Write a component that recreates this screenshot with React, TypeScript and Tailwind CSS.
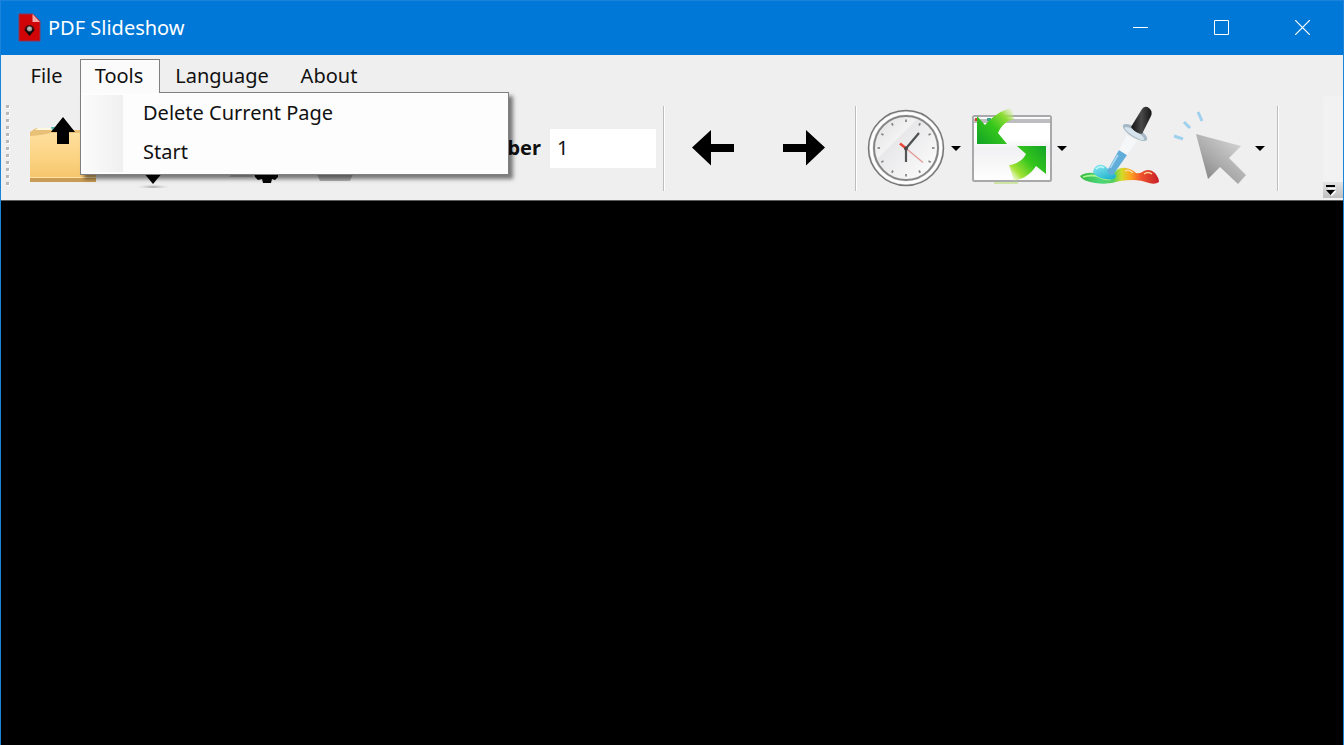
import React from "react";

function AppIcon() {
  return (
    <svg className="h-[30px] w-6" viewBox="0 0 24 30" aria-hidden="true">
      <path d="M2 1h14l7 7v20H2z" fill="#cf0508" stroke="#8c3557" strokeWidth="1" />
      <path d="M15.500 1v8H23z" fill="#f3a9a9" />
      <path d="M7.500 17a5 5 0 0 1 10 0l-5 5z" fill="#3a1010" />
      <path d="M7.500 17l5 6 5-6z" fill="#100c0c" />
      <circle cx="12.500" cy="15.800" r="2.600" fill="#9a9a9a" />
      <circle cx="12.500" cy="15.400" r="1.200" fill="#c8c8c8" />
    </svg>
  );
}

function FolderIcon() {
  return (
    <svg className="size-20" viewBox="0 0 80 80" aria-hidden="true">
      <defs>
        <linearGradient id="folder" x1="0" y1="0" x2="0" y2="1">
          <stop offset="0" stopColor="#fedf9e" />
          <stop offset="0.5" stopColor="#fcd484" />
          <stop offset="1" stopColor="#f5c56c" />
        </linearGradient>
      </defs>
      <path d="M1 24l6-4h18l3 2h39v48H1z" fill="#e9c078" />
      <path d="M7 21l2-1h14l2 2H6z" fill="#fff7df" />
      <path d="M22 19h4l2 3h-5z" fill="#4fb5ad" />
      <path d="M1 28q14-1 20-3h46v46H1z" fill="url(#folder)" />
      <path d="M1 70h66v4H1z" fill="#c89c54" />
      <path d="M1 69h66v1H1z" fill="#ffe2a6" />
      <path d="M34 9l12 15h-6v12H28V24h-6z" fill="#000" />
    </svg>
  );
}

function SlidesIcon() {
  return (
    <svg className="size-20" viewBox="0 0 80 80" aria-hidden="true">
      <defs>
        <radialGradient id="slideShade">
          <stop offset="0" stopColor="#a3a3a3" />
          <stop offset="1" stopColor="#efefef" stopOpacity="0" />
        </radialGradient>
      </defs>
      <ellipse cx="40" cy="79" rx="19" ry="3" fill="url(#slideShade)" />
      <path d="M30 64h20L40 76z" fill="#050505" />
    </svg>
  );
}

function GearIcon() {
  return (
    <svg className="h-20 w-[72px]" viewBox="0 0 72 80" aria-hidden="true">
      <path d="M25 66h24v3l-3 3-3-1-1 4h-8l-1-4-4 1-3-3z" fill="#080808" />
      <path d="M2 67h22v2H0z" fill="#c2c2c2" />
    </svg>
  );
}

function PageIcon() {
  return (
    <svg className="h-20 w-[60px]" viewBox="0 0 60 80" aria-hidden="true">
      <path d="M12 66h36l-3 7H15z" fill="#b4b4b4" />
    </svg>
  );
}

function ArrowIcon({ right = false }: { right?: boolean }) {
  return (
    <svg className="size-20" viewBox="0 0 80 80" aria-hidden="true">
      {right ? (
        <path d="M20 36h23V22l19 17.500L43 57.500V44H20z" fill="#000" />
      ) : (
        <path d="M61 36H38V22L19 39.500 38 57.500V44h23z" fill="#000" />
      )}
    </svg>
  );
}

function ClockIcon() {
  const ticks = Array.from({ length: 12 }, (_, i) => i * 30);
  return (
    <svg className="size-20" viewBox="0 0 80 80" aria-hidden="true">
      <defs>
        <linearGradient id="clockFace" x1="0" y1="0" x2="1" y2="1">
          <stop offset="0" stopColor="#dedede" />
          <stop offset="0.35" stopColor="#f3f3f3" />
          <stop offset="0.37" stopColor="#e8e8ea" />
          <stop offset="1" stopColor="#fff" />
        </linearGradient>
      </defs>
      <circle cx="40" cy="40" r="37.500" fill="#e4e4e4" stroke="#777" strokeWidth="1.500" />
      <circle cx="40" cy="40" r="34.800" fill="none" stroke="#fff" strokeWidth="2.500" />
      <circle cx="40" cy="40" r="32" fill="url(#clockFace)" stroke="#858585" strokeWidth="2" />
      {ticks.map((a) => (
        <path
          key={a}
          d="M40 11.500v2.500"
          stroke="#888"
          strokeWidth="1.800"
          transform={`rotate(${a} 40 40)`}
        />
      ))}
      <path d="M40 40v14" stroke="#555" strokeWidth="2.200" />
      <path d="M39.500 41L53 25" stroke="#4d5053" strokeWidth="2.200" />
      <path d="M36 37l21 17.500" stroke="#e29a96" strokeWidth="1.300" />
      <path d="M34 35.500l5.500 4.500" stroke="#e9463e" strokeWidth="2.600" />
      <circle cx="40" cy="40.500" r="2" fill="#474747" />
    </svg>
  );
}

function ResizeIcon() {
  return (
    <svg className="size-20 overflow-visible" viewBox="0 0 80 80" aria-hidden="true">
      <defs>
        <linearGradient id="pane" x1="0" y1="0" x2="0" y2="1">
          <stop offset="0" stopColor="#fff" />
          <stop offset="0.35" stopColor="#fff" />
          <stop offset="0.5" stopColor="#f1f1f3" />
          <stop offset="1" stopColor="#fff" />
        </linearGradient>
        <linearGradient id="inward" gradientUnits="userSpaceOnUse" x1="8" y1="36" x2="43" y2="2">
          <stop offset="0" stopColor="#14a526" />
          <stop offset="0.45" stopColor="#35c61c" />
          <stop offset="0.75" stopColor="#8fdc35" />
          <stop offset="1" stopColor="#d8f19a" stopOpacity="0.1" />
        </linearGradient>
        <linearGradient id="outward" gradientUnits="userSpaceOnUse" x1="74" y1="40" x2="38" y2="72">
          <stop offset="0" stopColor="#14a526" />
          <stop offset="0.45" stopColor="#35c61c" />
          <stop offset="0.78" stopColor="#a5e336" />
          <stop offset="1" stopColor="#d8f19a" stopOpacity="0.1" />
        </linearGradient>
      </defs>
      <rect x="1" y="8" width="78" height="65" rx="1.500" fill="url(#pane)" stroke="#a9a9ab" strokeWidth="2" />
      <path d="M2 9h76v2H2z" fill="#fafafa" />
      <path d="M2 11h76v4H2z" fill="#bdbdbf" />
      <path d="M3 10h4v3H3z" fill="#d0402e" />
      <path d="M15 10h4v3h-4z" fill="#3ba48d" />
      <path d="M5 8l8 9C20 9 28 3 39 0l3 11c-8 2-13 7-16 14l9 11H5z" fill="url(#inward)" />
      <path d="M74 38v28l-10-8c-6 9-13 13-22 15l-5-16c8-1 14-5 17-11l-9-8z" fill="url(#outward)" />
      <path d="M22 75h24" stroke="#cfe6a6" strokeWidth="2" />
    </svg>
  );
}

function DropperIcon() {
  return (
    <svg className="size-20 overflow-visible" viewBox="0 0 80 80" aria-hidden="true">
      <defs>
        <linearGradient id="paint" gradientUnits="userSpaceOnUse" x1="2" y1="0" x2="82" y2="0">
          <stop offset="0" stopColor="#37b83f" />
          <stop offset="0.25" stopColor="#4bd67a" />
          <stop offset="0.42" stopColor="#55cf5c" />
          <stop offset="0.52" stopColor="#d2dc28" />
          <stop offset="0.63" stopColor="#ffa51f" />
          <stop offset="0.76" stopColor="#f0532c" />
          <stop offset="1" stopColor="#c41c2a" />
        </linearGradient>
        <linearGradient id="drop" x1="0" y1="0" x2="0.6" y2="1">
          <stop offset="0" stopColor="#8eeaf2" />
          <stop offset="1" stopColor="#25b5cf" />
        </linearGradient>
        <linearGradient id="bulb" x1="0" x2="1">
          <stop offset="0" stopColor="#111" />
          <stop offset="0.5" stopColor="#4a4a4a" />
          <stop offset="1" stopColor="#151515" />
        </linearGradient>
      </defs>
      <path d="M2 68q6-4 14-3 12 2 22-2 4-4 10-3 6 1 10 5 4 1 8-2 6-3 11 2 4 5 4 9-4 3-10 1-8-3-15-3-8 0-14 1-12 4-25 2Q4 73 2 68z" fill="url(#paint)" />
      <path d="M5 69q10-3 16 0 5 3 12 2" fill="none" stroke="#a9f58e" strokeWidth="1.800" />
      <path d="M15 64c1-8 10-10 15-3l8 6c0 5-6 5-10 4-5 0-11-3-13-7z" fill="url(#drop)" />
      <path d="M18 61q4-4 8-1" fill="none" stroke="#c4f7fa" strokeWidth="1.500" />
      <path d="M47 63q4-2 8 2M66 66q4-3 8 0" fill="none" stroke="#ffd69a" strokeWidth="1.500" />
      <path d="M41 42l8 5-14 20q-4 0-6-4z" fill="#5fadd8" />
      <path d="M40 47L32 60" stroke="#a3d3ee" strokeWidth="2" />
      <path d="M49 27l10 6-10 14-8-5z" fill="#f6f7f9" />
      <ellipse cx="57" cy="24.500" rx="14" ry="5" transform="rotate(32 57 24.500)" fill="#a6b8c6" />
      <ellipse cx="56.500" cy="25.500" rx="11.500" ry="2.800" transform="rotate(32 56.500 25.500)" fill="#d6e3ec" />
      <path d="M53 19L64 1q3-4 7-1 4 3 2 8l-9 18q-7-1-11-7z" fill="url(#bulb)" />
    </svg>
  );
}

function PointerIcon() {
  return (
    <svg className="size-20" viewBox="0 0 80 80" aria-hidden="true">
      <defs>
        <linearGradient id="pointer" x1="0" y1="1" x2="0.8" y2="0.1">
          <stop offset="0" stopColor="#777" />
          <stop offset="0.5" stopColor="#aaa" />
          <stop offset="1" stopColor="#d2d2d2" />
        </linearGradient>
      </defs>
      <path d="M24 26l45 12-12 12 17 17-8 9-18-17-12 12z" fill="url(#pointer)" />
      <path d="M2 28l9 3M12 14l6 6M26 4l4 9" stroke="#9fd0ee" strokeWidth="3" />
    </svg>
  );
}

function Caret() {
  return (
    <svg className="h-[5px] w-[10px]" viewBox="0 0 10 5" aria-hidden="true">
      <path d="M0 0h10L5 5z" fill="#000" />
    </svg>
  );
}

function ToolButton({ label, className = "", children }: { label: string; className?: string; children: React.ReactNode }) {
  return (
    <button type="button" aria-label={label} className={`shrink-0 ${className}`}>
      {children}
    </button>
  );
}

function Separator({ className = "" }: { className?: string }) {
  return <div role="separator" className={`h-[85px] w-0.5 shrink-0 border-r border-l border-l-[#bdbdbd] border-r-white ${className}`} />;
}

function TitleBar() {
  return (
    <header className="flex h-[54px] shrink-0 items-center bg-[#0078d7] text-white">
      <div className="flex items-center gap-[7px] pl-4">
        <AppIcon />
        <h1 className="text-[20px] leading-7">PDF Slideshow</h1>
      </div>
      <div className="ml-auto flex h-full">
        <button type="button" aria-label="Minimize" className="flex w-[81px] items-center justify-center pb-px">
          <svg className="size-[15px]" viewBox="0 0 15 15" aria-hidden="true">
            <path d="M0 7.500h15" stroke="#fff" />
          </svg>
        </button>
        <button type="button" aria-label="Maximize" className="flex w-[81px] items-center justify-center pb-px">
          <svg className="size-[15px]" viewBox="0 0 15 15" aria-hidden="true">
            <path d="M.5.5h14v14H.5z" fill="none" stroke="#fff" />
          </svg>
        </button>
        <button type="button" aria-label="Close" className="flex w-[81px] items-center justify-center pb-px">
          <svg className="size-[15px]" viewBox="0 0 15 15" aria-hidden="true">
            <path d="M0 0l15 15M15 0L0 15" fill="none" stroke="#fff" strokeWidth="1.200" />
          </svg>
        </button>
      </div>
    </header>
  );
}

function MenuBar() {
  return (
    <nav className="flex h-[41px] shrink-0 items-start pt-1 pl-[14px] text-[20px] leading-8">
      <button type="button" className="h-[34px] w-[65px] pr-0.5">File</button>
      <div className="relative">
        <button
          type="button"
          aria-expanded="true"
          className="relative z-20 block h-[34px] w-20 border border-b-0 border-[#808080] bg-[#fbfbfb] pr-0.5 pb-0.5"
        >
          Tools
        </button>
        <div
          role="menu"
          className="absolute top-[33px] left-0 z-10 flex w-[429px] border border-[#808080] bg-[#fdfdfd] shadow-[4px_4px_4px_rgba(0,0,0,0.5)]"
        >
          <div className="my-0.5 ml-0.5 w-10 bg-linear-to-r from-[#fbfbfb] to-[#f0f0f0]" />
          <div className="flex flex-1 flex-col pt-px pb-[3px]">
            <button type="button" role="menuitem" className="h-[38px] pl-5 text-left">Delete Current Page</button>
            <button type="button" role="menuitem" className="h-[39px] pl-5 text-left">Start</button>
          </div>
        </div>
      </div>
      <button type="button" className="h-[34px] w-[124px]">Language</button>
      <button type="button" className="h-[34px] w-[90px]">About</button>
    </nav>
  );
}

function Toolbar() {
  return (
    <div role="toolbar" className="flex h-[105px] shrink-0 items-center overflow-hidden border-b border-[#5c5c5c] pl-[5px]">
      <div className="flex shrink-0 flex-col gap-1 pb-1.5">
        {Array.from({ length: 12 }, (_, i) => (
          <span key={i} className="size-[3px] bg-[#b8b8b8] shadow-[1px_1px_0_#fff]" />
        ))}
      </div>
      <ToolButton label="Open" className="ml-5"><FolderIcon /></ToolButton>
      <ToolButton label="Start slideshow" className="ml-1"><SlidesIcon /></ToolButton>
      <ToolButton label="Settings" className="ml-9"><GearIcon /></ToolButton>
      <ToolButton label="Page view" className="ml-1"><PageIcon /></ToolButton>
      <label htmlFor="page-number" className="w-44 shrink-0 text-right text-[20px] leading-7 font-bold">
        Page Number
      </label>
      <input
        id="page-number"
        type="text"
        defaultValue="1"
        className="ml-[9px] h-[39px] w-[106px] shrink-0 bg-white px-[7px] pb-0.5 text-[20px] leading-7 outline-none"
      />
      <Separator className="ml-[7px]" />
      <ToolButton label="Previous page" className="ml-2"><ArrowIcon /></ToolButton>
      <ToolButton label="Next page" className="ml-[10px]"><ArrowIcon right /></ToolButton>
      <Separator className="ml-3" />
      <ToolButton label="Timer" className="ml-[9px]"><ClockIcon /></ToolButton>
      <ToolButton label="Timer options" className="flex h-20 w-5 items-center justify-center"><Caret /></ToolButton>
      <ToolButton label="Window size" className="ml-[6px]"><ResizeIcon /></ToolButton>
      <ToolButton label="Window size options" className="flex h-20 w-5 items-center justify-center"><Caret /></ToolButton>
      <ToolButton label="Background colour" className="ml-[6px]"><DropperIcon /></ToolButton>
      <ToolButton label="Pointer" className="ml-[14px]"><PointerIcon /></ToolButton>
      <ToolButton label="Pointer options" className="flex h-20 w-4 items-center justify-center"><Caret /></ToolButton>
      <Separator className="ml-[9px]" />
      <button
        type="button"
        aria-label="More tools"
        className="ml-auto flex h-full w-5 shrink-0 flex-col justify-end rounded-l bg-[#f2f2f2] pb-0.5"
      >
        <span className="flex h-4 w-full items-center justify-center bg-linear-to-b from-[#e4e4e4] to-[#bebebe] pr-1">
          <svg className="h-[11px] w-[10px]" viewBox="0 0 10 11" aria-hidden="true">
            <path d="M2 3h9v1H2zM1 6h9v1L6 11z" fill="#fff" />
            <path d="M0 0h9v2H0zM0 5h9L4.500 10z" fill="#000" />
          </svg>
        </span>
      </button>
    </div>
  );
}

export default function App() {
  return (
    <div className="flex min-h-screen flex-col border-x border-t border-[#1a84da] bg-[#efefef] font-['Noto_Sans','Open_Sans',sans-serif] text-[#111]">
      <TitleBar />
      <MenuBar />
      <Toolbar />
      <main className="flex-1 bg-black" />
    </div>
  );
}
